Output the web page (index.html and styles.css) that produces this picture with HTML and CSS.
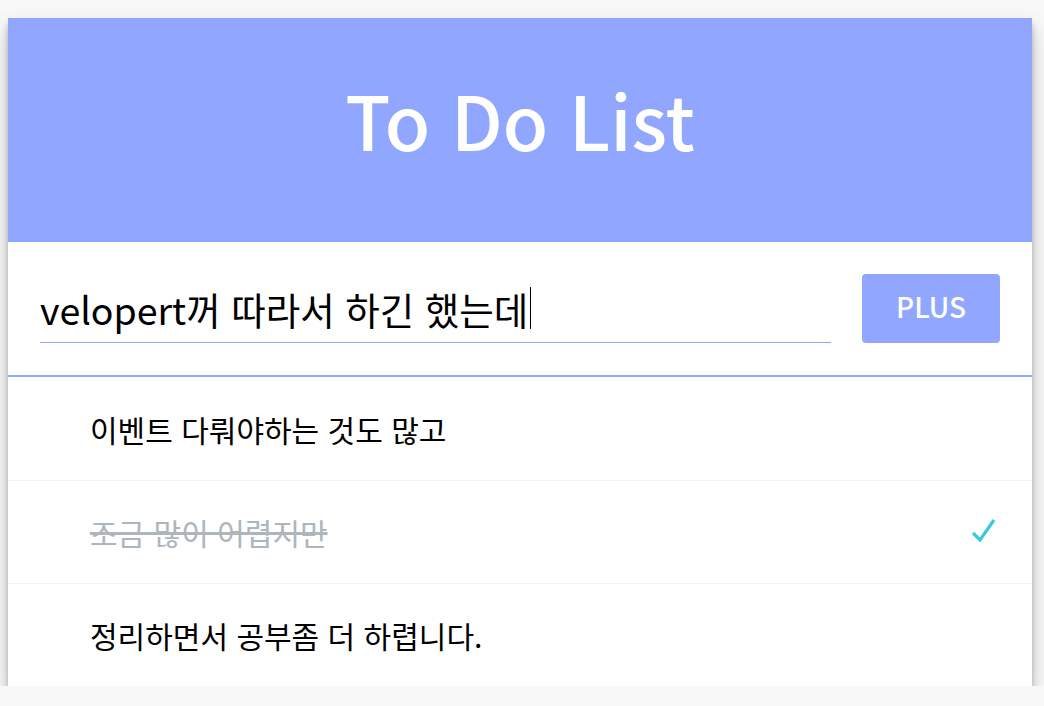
FILE: index.html
```html
<!DOCTYPE html>
<html lang="ko">
<head>
<meta charset="utf-8">
<title>To Do List</title>
<link rel="stylesheet" href="styles.css">
</head>
<body>
  <main class="card">
    <header class="header">
      <h1 class="title">To Do List</h1>
    </header>
    <form class="form">
      <div class="input">velopert꺼 따라서 하긴 했는데<span class="caret"></span></div>
      <button type="button" class="plus">PLUS</button>
    </form>
    <ul class="list">
      <li class="item">
        <span class="text">이벤트 다뤄야하는 것도 많고</span>
      </li>
      <li class="item done">
        <span class="text">조금 많이 어렵지만</span>
        <svg class="check" width="26" height="28" viewBox="0 0 26 28" aria-hidden="true">
          <path d="M2 15 L9 22 L23 2" fill="none" stroke="#3bc9db" stroke-width="3.2"/>
        </svg>
      </li>
      <li class="item">
        <span class="text">정리하면서 공부좀 더 하렵니다.</span>
      </li>
    </ul>
  </main>
</body>
</html>
```

FILE: styles.css
```css
* { box-sizing: border-box; }

html, body {
  margin: 0;
  padding: 0;
  background: #f8f8f8;
}

body {
  padding: 18px 8px 0;
  font-family: "Noto Sans CJK KR", "Noto Sans", sans-serif;
  color: #000;
}

.card {
  width: 1024px;
  background: #fff;
  box-shadow: 0 10px 20px rgba(0,0,0,0.19), 0 6px 6px rgba(0,0,0,0.23);
}

.header {
  height: 224px;
  padding-bottom: 22px;
  background: #91a7ff;
  display: flex;
  align-items: center;
  justify-content: center;
}

.title {
  margin: 0;
  color: #fff;
  font-size: 74px;
  font-weight: 500;
  line-height: 1;
}

.form {
  display: flex;
  gap: 31px;
  padding: 32px;
  border-bottom: 2px solid #91a7ff;
  margin: 0;
}

.input {
  flex: 1;
  display: flex;
  align-items: center;
  font-size: 37.5px;
  border-bottom: 1px solid #91a7ff;
  white-space: pre;
}

.caret {
  display: inline-block;
  width: 1px;
  height: 42px;
  background: #000;
  margin-left: 2px;
}

.plus {
  width: 138px;
  height: 69px;
  border: none;
  border-radius: 4px;
  background: #91a7ff;
  color: #fff;
  font-family: inherit;
  font-size: 28px;
  font-weight: 500;
  padding: 0 0 6px;
}

.list {
  list-style: none;
  margin: 0;
  padding: 0;
}

.item {
  height: 103px;
  display: flex;
  align-items: center;
  justify-content: space-between;
  padding: 0 35px 0 82px;
  font-size: 30px;
}

.item + .item {
  border-top: 1px solid #f1f3f5;
}

.item.done .text {
  color: #adb5bd;
  text-decoration: line-through;
}

.check {
  display: block;
}
```
